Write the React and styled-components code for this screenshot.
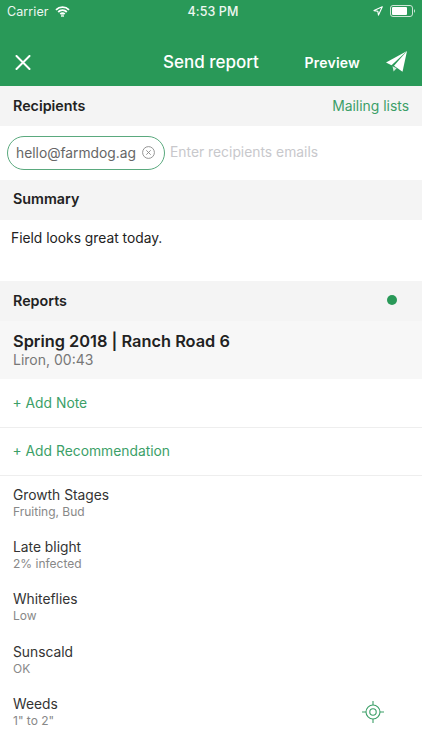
import React from "react";
import styled, { createGlobalStyle } from "styled-components";

const Global = createGlobalStyle`
  html, body { margin: 0; padding: 0; background: #fff; }
  body { font-family: Inter, "Liberation Sans", sans-serif; -webkit-font-smoothing: antialiased; }
`;
const Page = styled.div`width: 422px; height: 750px; overflow: hidden; display: flex; flex-direction: column; background: #fff; color: #222;`;
const Top = styled.header`height: 86px; flex: none; background: #299958; color: #fff; display: flex; flex-direction: column;`;
const Status = styled.div`height: 22px; padding: 0 6px 0 7px; display: grid; grid-template-columns: 1fr auto 1fr; align-items: center; font-size: 12.5px; letter-spacing: .1px; color: #eef7f1;`;
const StatusLeft = styled.div`display: flex; align-items: center; gap: 6px;`;
const StatusTime = styled.div`font-weight: 500; font-size: 12.5px; margin-left: 3px;`;
const StatusRight = styled.div`display: flex; justify-content: flex-end; align-items: center; gap: 7px;`;
const Nav = styled.div`flex: 1; display: flex; align-items: center; padding: 16px 14px 0 15px;`;
const NavTitle = styled.div`margin-left: 132px; font-size: 17px; font-weight: 500; line-height: 24px;`;
const NavActions = styled.div`margin-left: auto; display: flex; align-items: center; gap: 26px;`;
const Preview = styled.div`font-size: 14px; font-weight: 600; letter-spacing: .2px;`;
const Section = styled.div`height: 40px; flex: none; box-sizing: border-box; background: #f4f4f4; display: flex; align-items: center; justify-content: space-between; padding: 0 13px ${p => p.$lift}px; font-size: 14.3px; font-weight: 600; color: #222;`;
const Link = styled.span`font-weight: 400; color: #3c9f68; font-size: 13.9px;`;
const Dot = styled.span`width: 10px; height: 10px; border-radius: 50%; background: #299958; margin-right: 12px;`;
const RecipientRow = styled.div`height: 53px; flex: none; display: flex; align-items: center; padding: 0 0 1px 7px; gap: 5px;`;
const Chip = styled.div`box-sizing: border-box; height: 34px; width: 158px; border: 1.2px solid #5aa97e; border-radius: 17px; display: flex; align-items: center; justify-content: space-between; padding: 0 9px 0 8px; color: #666; font-size: 13.8px;`;
const Placeholder = styled.div`color: #c8c8cc; font-size: 13.85px; padding-bottom: 2px;`;
const Summary = styled.div`height: 61px; flex: none; box-sizing: border-box; padding: 9px 11px; font-size: 13.8px; line-height: 18px; color: #222;`;
const ReportHead = styled.div`height: 58px; flex: none; box-sizing: border-box; background: #f7f7f7; padding: 10px 13px 0;`;
const ReportTitle = styled.div`font-size: 16.35px; font-weight: 600; line-height: 20px; color: #222;`;
const ReportSub = styled.div`font-size: 14px; line-height: 18px; color: #777;`;
const AddRow = styled.div`height: 48.5px; flex: none; box-sizing: border-box; border-bottom: 1px solid #eee; display: flex; align-items: center; padding: 0 13px 0 12.5px; color: #3c9f68; font-size: 13.85px;`;
const List = styled.div`position: relative; padding-top: 9px; display: flex; flex-direction: column;`;
const Item = styled.div`height: 52.2px; flex: none; padding: 0 13px;`;
const ItemName = styled.div`font-size: 13.8px; line-height: 20px; color: #333;`;
const ItemValue = styled.div`font-size: 12px; line-height: 14px; color: #888;`;
const Locate = styled.svg`position: absolute; left: 362px; top: 225px;`;

const items = [["Growth Stages", "Fruiting, Bud"], ["Late blight", "2% infected"], ["Whiteflies", "Low"], ["Sunscald", "OK"], ["Weeds", '1" to 2"']];

export default function App() {
  return (
    <Page>
      <Global />
      <Top>
        <Status>
          <StatusLeft>
            Carrier
            <svg width="15" height="11" viewBox="0 0 15 11" fill="none" stroke="#fff" strokeWidth="1.8">
              <path d="M1 3.800a9.200 9.200 0 0 1 13 0M3.200 6a6 6 0 0 1 8.600 0M5.300 8.200a3 3 0 0 1 4.400 0" />
              <circle cx="7.500" cy="9.900" r=".4" fill="#fff" />
            </svg>
          </StatusLeft>
          <StatusTime>4:53 PM</StatusTime>
          <StatusRight>
            <svg width="10" height="10" viewBox="0 0 10 10" fill="none" stroke="#fff" strokeWidth="1.100" strokeLinejoin="round"><path d="M9.300.7 1 4.600l3.800.6.700 3.900z" /></svg>
            <svg width="26" height="12" viewBox="0 0 26 12">
              <rect x=".5" y=".5" width="22" height="11" rx="2.500" fill="none" stroke="#cfe6d8" />
              <rect x="2" y="2" width="15" height="8" rx="1" fill="#fff" />
              <path d="M24 4.200v3.600c.7-.3 1-1 1-1.800s-.3-1.500-1-1.800z" fill="#cfe6d8" />
            </svg>
          </StatusRight>
        </Status>
        <Nav>
          <svg width="16" height="15" viewBox="0 0 16 15" stroke="#fff" strokeWidth="2" strokeLinecap="round"><path d="M1.500 1l13 13M14.500 1l-13 13" /></svg>
          <NavTitle>Send report</NavTitle>
          <NavActions>
            <Preview>Preview</Preview>
            <svg width="22" height="22" viewBox="0 0 22 22" fill="#fff">
              <path d="M21 0 0 11.500l5.500 2.800z" />
              <path d="M21 0 8 14.800l8.500 6z" />
              <path d="M6.500 15.200 7.600 20.500l3-3.200z" fill="#d7ecdf" />
            </svg>
          </NavActions>
        </Nav>
      </Top>
      <Section $lift={1}>Recipients<Link>Mailing lists</Link></Section>
      <RecipientRow>
        <Chip>
          hello@farmdog.ag
          <svg width="13" height="13" viewBox="0 0 13 13" fill="none" stroke="#888" strokeWidth=".9">
            <circle cx="6.500" cy="6.500" r="5.900" /><path d="M4.300 4.300l4.400 4.400M8.700 4.300 4.300 8.700" />
          </svg>
        </Chip>
        <Placeholder>Enter recipients emails</Placeholder>
      </RecipientRow>
      <Section $lift={4}>Summary</Section>
      <Summary>Field looks great today.</Summary>
      <Section $lift={2}>Reports<Dot /></Section>
      <ReportHead>
        <ReportTitle>Spring 2018 | Ranch Road 6</ReportTitle>
        <ReportSub>Liron, 00:43</ReportSub>
      </ReportHead>
      <AddRow>+ Add Note</AddRow>
      <AddRow>+ Add Recommendation</AddRow>
      <List>
        {items.map(([name, value]) => (
          <Item key={name}><ItemName>{name}</ItemName><ItemValue>{value}</ItemValue></Item>
        ))}
        <Locate width="22" height="22" viewBox="0 0 22 22" fill="none" stroke="#3c9f68" strokeWidth="1.100">
          <circle cx="11" cy="11" r="7" /><circle cx="11" cy="11" r="3.200" /><path d="M11 0v4M11 18v4M0 11h4M18 11h4" />
        </Locate>
      </List>
    </Page>
  );
}
